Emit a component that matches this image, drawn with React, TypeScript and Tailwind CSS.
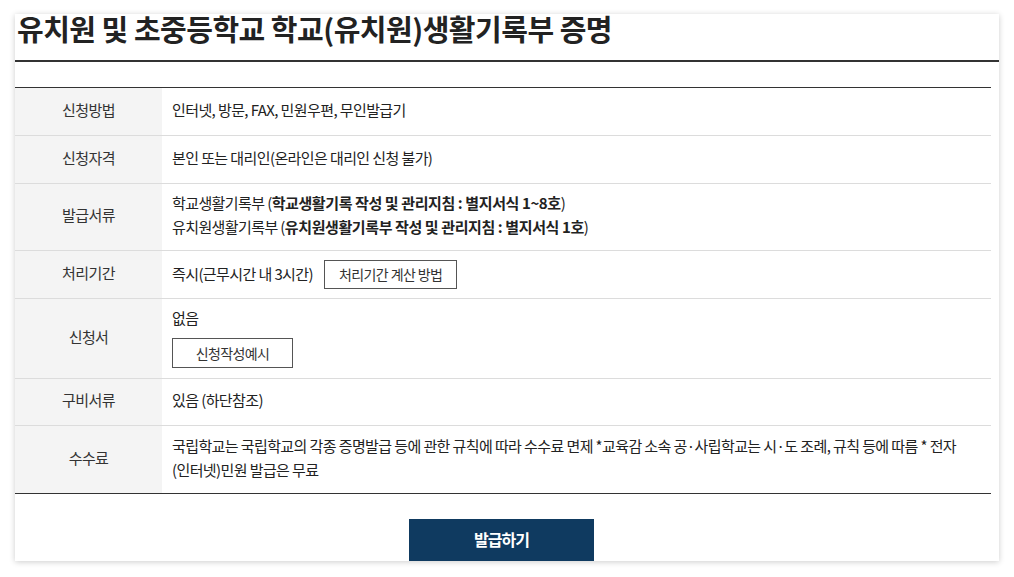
import React from "react";

const rows: { label: string; content: React.ReactNode; cls: string }[] = [
  { label: "신청방법", cls: "min-h-[47px] pt-[7px] pb-[11px]", content: "인터넷, 방문, FAX, 민원우편, 무인발급기" },
  { label: "신청자격", cls: "min-h-[47px] pt-[7px] pb-[11px]", content: "본인 또는 대리인(온라인은 대리인 신청 불가)" },
  {
    label: "발급서류",
    cls: "min-h-[47px] pt-[7px] pb-[11px]",
    content: (
      <div>
        <p>
          학교생활기록부 (<b className="font-bold tracking-[-0.4px]">학교생활기록 작성 및 관리지침 : 별지서식 1~8호</b>)
        </p>
        <p>
          유치원생활기록부 (<b className="font-bold tracking-[-0.4px]">유치원생활기록부 작성 및 관리지침 : 별지서식 1호</b>)
        </p>
      </div>
    ),
  },
  {
    label: "처리기간",
    cls: "min-h-[47px] py-[9px]",
    content: (
      <div className="flex items-center">
        <span className="-mt-[2px]">즉시(근무시간 내 3시간)</span>
        <button className="ml-[11px] h-[29px] px-[14px] border border-[#555] text-[14px] leading-[25px] text-[#333] bg-white">
          처리기간 계산 방법
        </button>
      </div>
    ),
  },
  {
    label: "신청서",
    cls: "min-h-[47px] pt-[7px] pb-[10px]",
    content: (
      <div className="flex flex-col items-start">
        <span>없음</span>
        <button className="mt-[8px] h-[30px] w-[121px] border border-[#555] text-[14px] leading-[26px] text-[#333] bg-white">
          신청작성예시
        </button>
      </div>
    ),
  },
  { label: "구비서류", cls: "min-h-[46px] pt-[7px] pb-[11px]", content: "있음 (하단참조)" },
  {
    label: "수수료",
    cls: "min-h-[47px] pt-[8px] pb-[11px]",
    content: (
      <p>
        국립학교는 국립학교의 각종 증명발급 등에 관한 규칙에 따라 수수료 면제 *교육감 소속 공·사립학교는 시·도 조례, 규칙 등에 따름 * 전자
        <br />
        (인터넷)민원 발급은 무료
      </p>
    ),
  },
];

export default function App() {
  return (
    <div
      className="min-h-screen bg-white pt-[14px] pl-[15px] text-[#333]"
      style={{ fontFamily: '"Noto Sans CJK KR", "Noto Sans", sans-serif' }}
    >
      <div className="w-[984px] h-[547px] flex flex-col bg-white shadow-[0_1px_6px_rgba(0,0,0,0.2)]">
        <h2 className="-mt-[2px] border-b-2 border-[#333] pl-[2px] pb-[16px] text-[29px] font-bold leading-[32px] tracking-[-0.5px] text-[#222]">
          유치원 및 초중등학교 학교(유치원)생활기록부 증명
        </h2>

        <div className="mt-[25px] mr-[8px] border-t border-b border-[#333] text-[15px] leading-[24px] tracking-[-0.6px]">
          {rows.map((r, i) => (
            <div
              key={r.label}
              className={
                i === rows.length - 1 ? "flex" : "flex border-b border-[#dcdcdc]"
              }
            >
              <div className="w-[147px] shrink-0 bg-[#f4f4f4] flex items-center justify-center pb-[4px] text-[#333]">
                {r.label}
              </div>
              <div className={"flex-1 flex items-center pl-[10px] pr-[12px] text-[#222] " + r.cls}>
                {r.content}
              </div>
            </div>
          ))}
        </div>

        <div className="mr-[11px] mt-[25px] flex justify-center">
          <button className="h-[42px] w-[185px] bg-[#0f3a60] pb-[2px] text-white text-[16px] font-bold tracking-[-1px]">
            발급하기
          </button>
        </div>
      </div>
    </div>
  );
}
